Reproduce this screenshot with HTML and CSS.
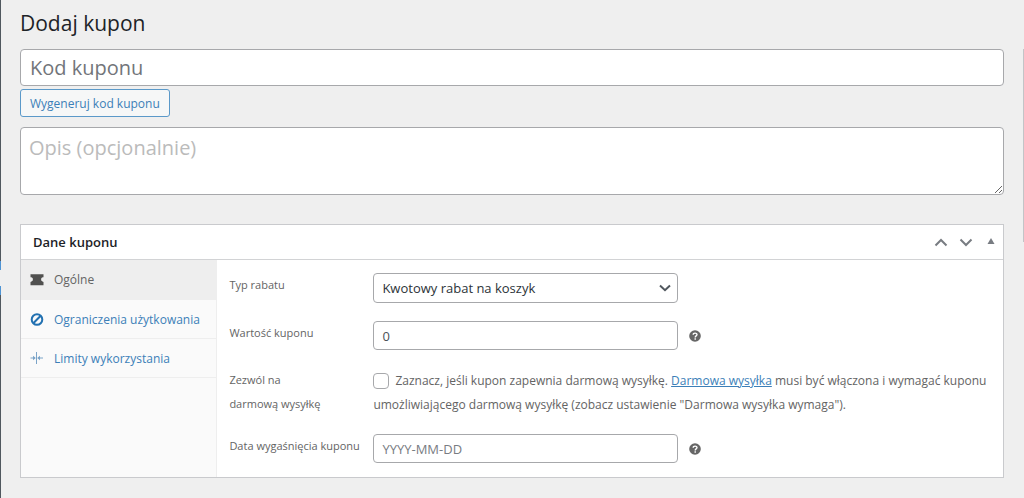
FILE: index.html
```html
<!DOCTYPE html>
<html lang="pl">
<head>
<meta charset="utf-8">
<title>Dodaj kupon</title>
<link rel="stylesheet" href="styles.css">
</head>
<body>
<div class="screen">
  <div class="menu-edge"><span class="menu-current"></span><span class="menu-arrow"></span><span class="menu-current"></span></div>
  <main class="content">
    <h1 class="page-title">Dodaj kupon</h1>
    <input class="code-input" type="text" placeholder="Kod kuponu" aria-label="Kod kuponu">
    <button class="generate" type="button">Wygeneruj kod kuponu</button>
    <textarea class="description" placeholder="Opis (opcjonalnie)" aria-label="Opis"></textarea>
    <section class="panel">
      <header class="panel-head">
        <h2 class="panel-title">Dane kuponu</h2>
        <button class="head-button" type="button" aria-label="W górę"><svg width="14" height="9" viewBox="0 0 14 9"><path d="M1.500 7.500 7 2l5.500 5.500" fill="none" stroke="currentColor" stroke-width="2"/></svg></button>
        <button class="head-button" type="button" aria-label="W dół"><svg width="14" height="9" viewBox="0 0 14 9"><path d="M1.500 1.500 7 7l5.500-5.500" fill="none" stroke="currentColor" stroke-width="2"/></svg></button>
        <button class="head-button head-toggle" type="button" aria-label="Zwiń"><svg width="8" height="8" viewBox="0 0 8 8"><path d="M4 0 7.500 6H.5z" fill="currentColor"/></svg></button>
      </header>
      <div class="panel-body">
        <nav class="tabs">
          <a class="tab tab-active" href="#general"><svg class="tab-icon" viewBox="0 0 14 14"><path d="M.5 1.200h13v3.100a1.800 2 0 0 0-1 4.200l1 .5v3.200H.5V9l1-.5a1.800 2 0 0 0-1-4.200z" fill="#50504f"/></svg>Ogólne</a>
          <a class="tab" href="#restrictions"><svg class="tab-icon" viewBox="0 0 14 14"><g fill="none" stroke="#2271b1" stroke-width="2"><circle cx="7" cy="6.500" r="5.300"/><path d="m3.300 10.200 7.400-7.400"/></g></svg>Ograniczenia użytkowania</a>
          <a class="tab" href="#limits"><svg class="tab-icon" viewBox="0 0 14 14"><g fill="none" stroke="#7ba4c8"><path d="M6.500 0v12M.5 6H5M13 6H8"/></g><path d="M3 3.700 5.800 6 3 8.300zM10 3.700 7.200 6 10 8.300z" fill="#7ba4c8"/></svg>Limity wykorzystania</a>
        </nav>
        <form class="fields">
          <div class="row">
            <label class="label" for="type">Typ rabatu</label>
            <div class="control"><span class="select-wrap"><select class="field select" id="type"><option>Kwotowy rabat na koszyk</option></select><svg class="chevron" width="12" height="8" viewBox="0 0 12 8"><path d="m1 1.500 5 4.700 5-4.700" fill="none" stroke="#50575e" stroke-width="2"/></svg></span></div>
          </div>
          <div class="row">
            <label class="label" for="amount">Wartość kuponu</label>
            <div class="control"><input class="field" id="amount" type="text" value="0"><svg class="help" viewBox="0 0 12 12"><circle cx="6" cy="6" r="5.800" fill="#666"/><path d="M4.200 4.800C4.200 2.500 8 2.600 8 4.600 8 6 6.200 5.800 6.200 7.400M6.200 8.300v1.400" fill="none" stroke="#fff" stroke-width="1.400"/></svg></div>
          </div>
          <div class="row row-check">
            <label class="label" for="free">Zezwól na darmową wysyłkę</label>
            <div class="note"><input class="check" id="free" type="checkbox">Zaznacz, jeśli kupon zapewnia darmową wysyłkę. <a class="link" href="#shipping">Darmowa wysyłka</a> musi być włączona i wymagać kuponu umożliwiającego darmową wysyłkę (zobacz ustawienie "Darmowa wysyłka wymaga").</div>
          </div>
          <div class="row">
            <label class="label" for="expiry">Data wygaśnięcia kuponu</label>
            <div class="control"><input class="field" id="expiry" type="text" placeholder="YYYY-MM-DD"><svg class="help" viewBox="0 0 12 12"><circle cx="6" cy="6" r="5.800" fill="#666"/><path d="M4.200 4.800C4.200 2.500 8 2.600 8 4.600 8 6 6.200 5.800 6.200 7.400M6.200 8.300v1.400" fill="none" stroke="#fff" stroke-width="1.400"/></svg></div>
          </div>
        </form>
      </div>
    </section>
  </main>
  <aside class="side-edge"></aside>
</div>
</body>
</html>
```
FILE: styles.css
```css
* { box-sizing: border-box; }
body { margin: 0; background: #efefef; color: #3c434a; font: 12px/24px "Open Sans", "Noto Sans", sans-serif; }
input, select, textarea, button { font-family: inherit; margin: 0; }
.screen { display: grid; grid-template-columns: 1px minmax(0, 1fr) 1px; min-height: 100vh; }
.menu-edge { background: #50575e; padding-top: 261px; display: flex; flex-direction: column; }
.menu-current { height: 9px; background: #4f94d4; }
.menu-arrow { height: 16px; background: #efefef; }
.side-edge { height: 193px; margin-top: 49px; background: #c3c4c7; }
.content { padding: 8px 19px 20px; display: flex; flex-direction: column; align-items: stretch; }
.page-title { margin: 0 0 11px; font-size: 21px; line-height: 30px; font-weight: 400; color: #1d2327; }
.code-input, .description, .field { border: 1px solid #a7a8ab; border-radius: 4px; background: #fff; outline: 0; }
.code-input { height: 37px; padding: 0 9px; font-size: 20px; }
.code-input::placeholder { color: #72757a; opacity: 1; }
.generate { align-self: flex-start; margin: 3px 0 10px; height: 28px; padding: 0 9px; border: 1px solid #5b99c9; border-radius: 3px; background: #f6f7f7; color: #3c7fb8; font-size: 12px; }
.description { display: block; height: 68px; padding: 6px 8px; font-size: 20px; line-height: 28px; resize: vertical; }
.description::placeholder { color: #bbb; opacity: 1; }
.panel { margin-top: 29px; border: 1px solid #c9cacd; background: #fff; }
.panel-head { display: flex; align-items: center; gap: 11px; height: 35px; padding: 0 8px 0 12px; border-bottom: 1px solid #d2d3d5; }
.panel-title { margin: 0 auto 0 0; font-size: 13px; font-weight: 600; color: #1d2327; }
.head-button { display: flex; padding: 0; border: 0; background: none; color: #787c82; }
.head-toggle { margin-left: 3px; }
.panel-body { display: grid; grid-template-columns: 20% minmax(0, 1fr); }
.tabs { background: #fafafa; border-right: 1px solid #eee; }
.tab { display: flex; align-items: center; gap: 10px; height: 39px; padding: 1px 9px 0; border-bottom: 1px solid #eee; color: #3c7fb8; text-decoration: none; white-space: nowrap; }
.tab-active { height: 40px; background: #eee; color: #646464; }
.tab-icon { flex: none; width: 14px; height: 14px; }
.fields { display: flex; flex-direction: column; gap: 18px; padding: 13px 8px 14px 12px; color: #646464; }
.row { display: grid; grid-template-columns: 132px minmax(0, 1fr); column-gap: 12px; }
.label { font-size: 11px; }
.row-check { margin-bottom: -1px; }
.row-check .label { padding-right: 36px; }
.note { padding-top: 1px; }
.control { display: flex; align-items: center; gap: 11px; padding-right: 12px; }
.field { width: 50%; height: 29px; padding: 0 8px; font-size: 13px; color: #4b5157; }
.field::placeholder { color: #787c82; opacity: 1; }
.select-wrap { display: grid; width: 50%; align-items: center; }
.select { grid-area: 1 / 1; width: 100%; height: 30px; appearance: none; color: #2c3338; }
.chevron { grid-area: 1 / 1; justify-self: end; margin-right: 7px; pointer-events: none; }
.help { flex: none; width: 12px; height: 12px; }
.check { appearance: none; width: 16px; height: 16px; margin: 0 6px 2px 0; border: 1px solid #a7a8ab; border-radius: 4px; background: #fff; vertical-align: middle; }
.link { color: #3c7fb8; }
```
